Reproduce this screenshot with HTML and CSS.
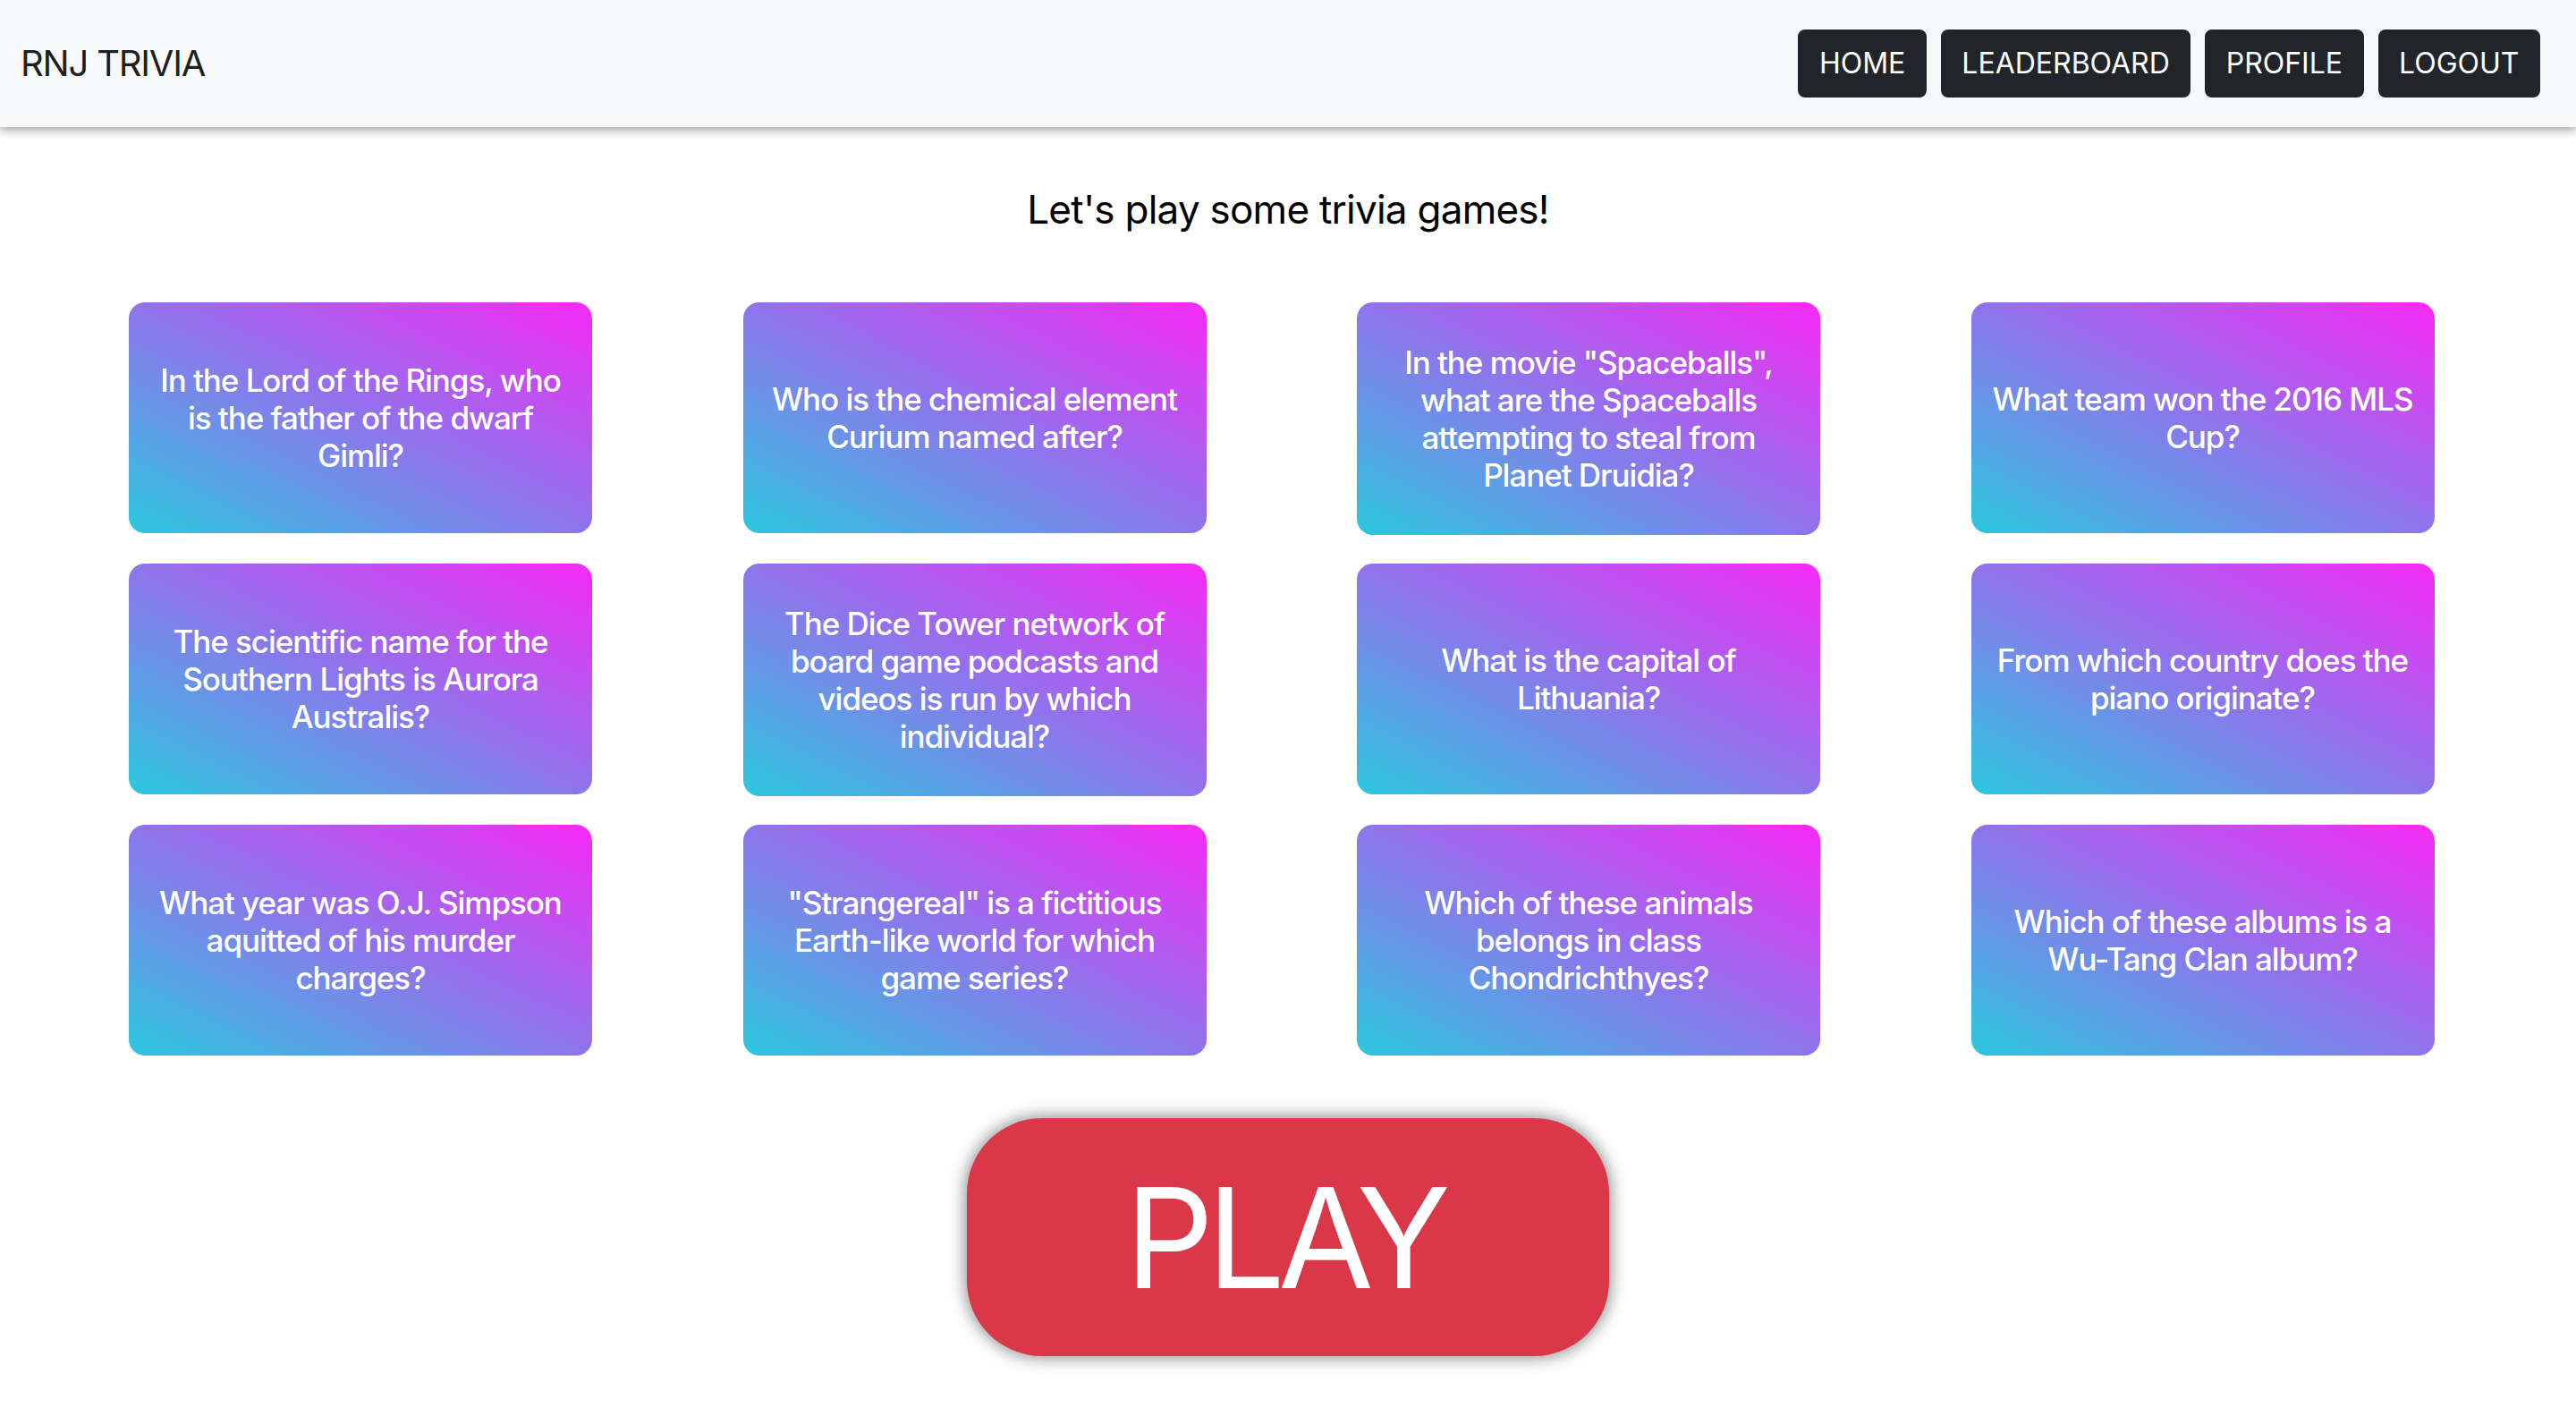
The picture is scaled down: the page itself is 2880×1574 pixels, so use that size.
FILE: index.html
```html
<!DOCTYPE html>
<html lang="en">
<head>
<meta charset="utf-8">
<title>RNJ Trivia</title>
<link rel="stylesheet" href="styles.css">
</head>
<body>
<nav class="navbar">
  <a class="brand" href="#">RNJ TRIVIA</a>
  <div class="nav-buttons">
    <a class="nav-btn" href="#">HOME</a>
    <a class="nav-btn" href="#">LEADERBOARD</a>
    <a class="nav-btn" href="#">PROFILE</a>
    <a class="nav-btn" href="#">LOGOUT</a>
  </div>
</nav>
<main class="main">
  <h1 class="title">Let's play some trivia games!</h1>
  <section class="cards">
    <div class="card"><p>In the Lord of the Rings, who is the father of the dwarf Gimli?</p></div>
    <div class="card"><p>Who is the chemical element Curium named after?</p></div>
    <div class="card"><p>In the movie "Spaceballs", what are the Spaceballs attempting to steal from Planet Druidia?</p></div>
    <div class="card"><p>What team won the 2016 MLS Cup?</p></div>
    <div class="card"><p>The scientific name for the Southern Lights is Aurora Australis?</p></div>
    <div class="card"><p>The Dice Tower network of board game podcasts and videos is run by which individual?</p></div>
    <div class="card"><p>What is the capital of Lithuania?</p></div>
    <div class="card"><p>From which country does the piano originate?</p></div>
    <div class="card"><p>What year was O.J. Simpson aquitted of his murder charges?</p></div>
    <div class="card"><p>"Strangereal" is a fictitious Earth-like world for which game series?</p></div>
    <div class="card"><p>Which of these animals belongs in class Chondrichthyes?</p></div>
    <div class="card"><p>Which of these albums is a Wu-Tang Clan album?</p></div>
  </section>
  <div class="play-wrap">
    <button class="play" type="button">PLAY</button>
  </div>
</main>
</body>
</html>
```
FILE: styles.css
```css
html, body {
  margin: 0;
  padding: 0;
  background: #fff;
}
body {
  font-family: Inter, "Noto Sans", "Liberation Sans", sans-serif;
  color: #212529;
}
.navbar {
  height: 142px;
  box-sizing: border-box;
  background: #f8f9fa;
  display: flex;
  align-items: center;
  justify-content: space-between;
  padding: 0 40px 0 23px;
  box-shadow: 0 4px 10px rgba(0, 0, 0, 0.35);
  position: relative;
  z-index: 2;
}
.brand {
  font-size: 40px;
  line-height: 48px;
  letter-spacing: -0.03em;
  color: rgba(0, 0, 0, 0.9);
  text-decoration: none;
}
.nav-buttons {
  display: flex;
  gap: 16px;
}
.nav-btn {
  display: block;
  font-size: 32px;
  line-height: 48px;
  padding: 12px 21.5px;
  border: 2px solid #212529;
  border-radius: 8px;
  background: #212529;
  color: #fff;
  text-decoration: none;
}
.main {
  padding-top: 66px;
}
.title {
  margin: 0;
  text-align: center;
  font-size: 44px;
  line-height: 53px;
  font-weight: 400;
  letter-spacing: -0.017em;
  color: #000;
}
.cards {
  margin-top: 77px;
  display: grid;
  grid-template-columns: repeat(4, 518px);
  column-gap: 168.5px;
  row-gap: 32px;
  padding-left: 144px;
  align-items: start;
}
.card {
  box-sizing: border-box;
  min-height: 258px;
  padding: 46px 21px;
  border-radius: 18px;
  background: linear-gradient(to top right, #2bc8de 0%, #8f74ec 50%, #f629f6 100%);
  display: flex;
  align-items: center;
  justify-content: center;
  text-align: center;
}
.card p {
  margin: 0;
  color: #fff;
  font-size: 35px;
  line-height: 42px;
  font-weight: 500;
  letter-spacing: -0.03em;
}
.play-wrap {
  display: flex;
  justify-content: center;
  margin-top: 70px;
  padding-bottom: 40px;
}
.play {
  width: 718px;
  height: 266px;
  border: none;
  border-radius: 84px;
  background: #da3749;
  color: #fff;
  font-family: Inter, "Noto Sans", "Liberation Sans", sans-serif;
  font-size: 155px;
  font-weight: 400;
  line-height: 1;
  letter-spacing: -0.05em;
  text-indent: -0.05em;
  box-shadow: 0 0 18px 2px rgba(0, 0, 0, 0.45);
  padding: 0;
}
```
